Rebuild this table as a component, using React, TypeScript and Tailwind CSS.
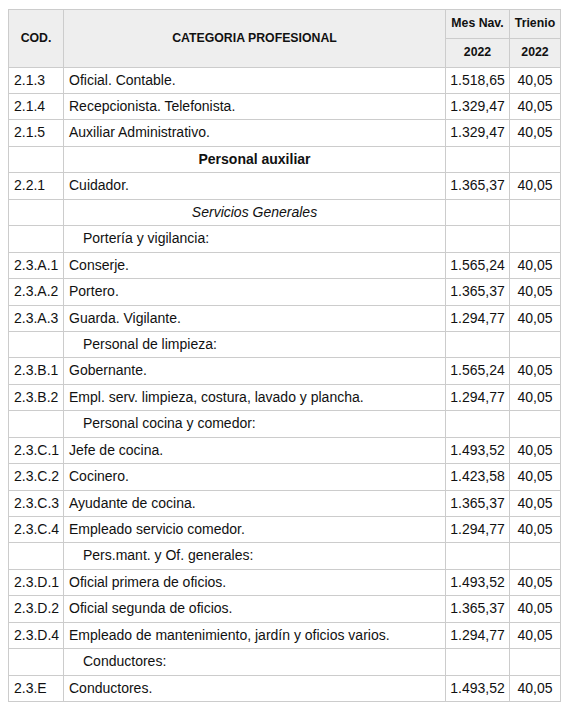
import React from 'react';

type Row =
  | { kind: 'item'; cod: string; name: string; mes: string; trienio: string }
  | { kind: 'group'; label: string }
  | { kind: 'section'; label: string }
  | { kind: 'sub'; label: string };

const rows: Row[] = [
  { kind: 'item', cod: '2.1.3', name: 'Oficial. Contable.', mes: '1.518,65', trienio: '40,05' },
  { kind: 'item', cod: '2.1.4', name: 'Recepcionista. Telefonista.', mes: '1.329,47', trienio: '40,05' },
  { kind: 'item', cod: '2.1.5', name: 'Auxiliar Administrativo.', mes: '1.329,47', trienio: '40,05' },
  { kind: 'group', label: 'Personal auxiliar' },
  { kind: 'item', cod: '2.2.1', name: 'Cuidador.', mes: '1.365,37', trienio: '40,05' },
  { kind: 'section', label: 'Servicios Generales' },
  { kind: 'sub', label: 'Portería y vigilancia:' },
  { kind: 'item', cod: '2.3.A.1', name: 'Conserje.', mes: '1.565,24', trienio: '40,05' },
  { kind: 'item', cod: '2.3.A.2', name: 'Portero.', mes: '1.365,37', trienio: '40,05' },
  { kind: 'item', cod: '2.3.A.3', name: 'Guarda. Vigilante.', mes: '1.294,77', trienio: '40,05' },
  { kind: 'sub', label: 'Personal de limpieza:' },
  { kind: 'item', cod: '2.3.B.1', name: 'Gobernante.', mes: '1.565,24', trienio: '40,05' },
  { kind: 'item', cod: '2.3.B.2', name: 'Empl. serv. limpieza, costura, lavado y plancha.', mes: '1.294,77', trienio: '40,05' },
  { kind: 'sub', label: 'Personal cocina y comedor:' },
  { kind: 'item', cod: '2.3.C.1', name: 'Jefe de cocina.', mes: '1.493,52', trienio: '40,05' },
  { kind: 'item', cod: '2.3.C.2', name: 'Cocinero.', mes: '1.423,58', trienio: '40,05' },
  { kind: 'item', cod: '2.3.C.3', name: 'Ayudante de cocina.', mes: '1.365,37', trienio: '40,05' },
  { kind: 'item', cod: '2.3.C.4', name: 'Empleado servicio comedor.', mes: '1.294,77', trienio: '40,05' },
  { kind: 'sub', label: 'Pers.mant. y Of. generales:' },
  { kind: 'item', cod: '2.3.D.1', name: 'Oficial primera de oficios.', mes: '1.493,52', trienio: '40,05' },
  { kind: 'item', cod: '2.3.D.2', name: 'Oficial segunda de oficios.', mes: '1.365,37', trienio: '40,05' },
  { kind: 'item', cod: '2.3.D.4', name: 'Empleado de mantenimiento, jardín y oficios varios.', mes: '1.294,77', trienio: '40,05' },
  { kind: 'sub', label: 'Conductores:' },
  { kind: 'item', cod: '2.3.E', name: 'Conductores.', mes: '1.493,52', trienio: '40,05' },
];

const td = 'border border-[#cccccc] py-1 leading-[17.43px] whitespace-nowrap';
const th = 'border border-[#cccccc] bg-[#eeeeee] py-[5.2px] leading-[17.4px] text-[12.3px] font-bold text-center';

export default function App() {
  return (
    <div className="pt-[9px] pl-2 font-['Liberation_Sans',Arial,sans-serif] text-[14px] text-[#111111] bg-white min-h-[714px]">
      <table className="w-[552px] table-fixed border-collapse">
        <colgroup>
          <col className="w-[55px]" />
          <col className="w-[382px]" />
          <col className="w-[64px]" />
          <col className="w-[51px]" />
        </colgroup>
        <thead>
          <tr>
            <th rowSpan={2} className={th}>COD.</th>
            <th rowSpan={2} className={th}>CATEGORIA PROFESIONAL</th>
            <th className={th}>Mes Nav.</th>
            <th className={th}>Trienio</th>
          </tr>
          <tr>
            <th className={th}>2022</th>
            <th className={th}>2022</th>
          </tr>
        </thead>
        <tbody>
          {rows.map((r, i) => {
            if (r.kind === 'item') {
              return (
                <tr key={i}>
                  <td className={`${td} px-[5px]`}>{r.cod}</td>
                  <td className={`${td} px-[5px]`}>{r.name}</td>
                  <td className={`${td} text-center`}>{r.mes}</td>
                  <td className={`${td} text-center`}>{r.trienio}</td>
                </tr>
              );
            }
            return (
              <tr key={i}>
                <td className={td} />
                <td
                  className={`${td} ${
                    r.kind === 'group'
                      ? 'text-center font-bold'
                      : r.kind === 'section'
                      ? 'text-center italic'
                      : 'pl-[19px]'
                  }`}
                >
                  {r.label}
                </td>
                <td className={td} />
                <td className={td} />
              </tr>
            );
          })}
        </tbody>
      </table>
    </div>
  );
}
